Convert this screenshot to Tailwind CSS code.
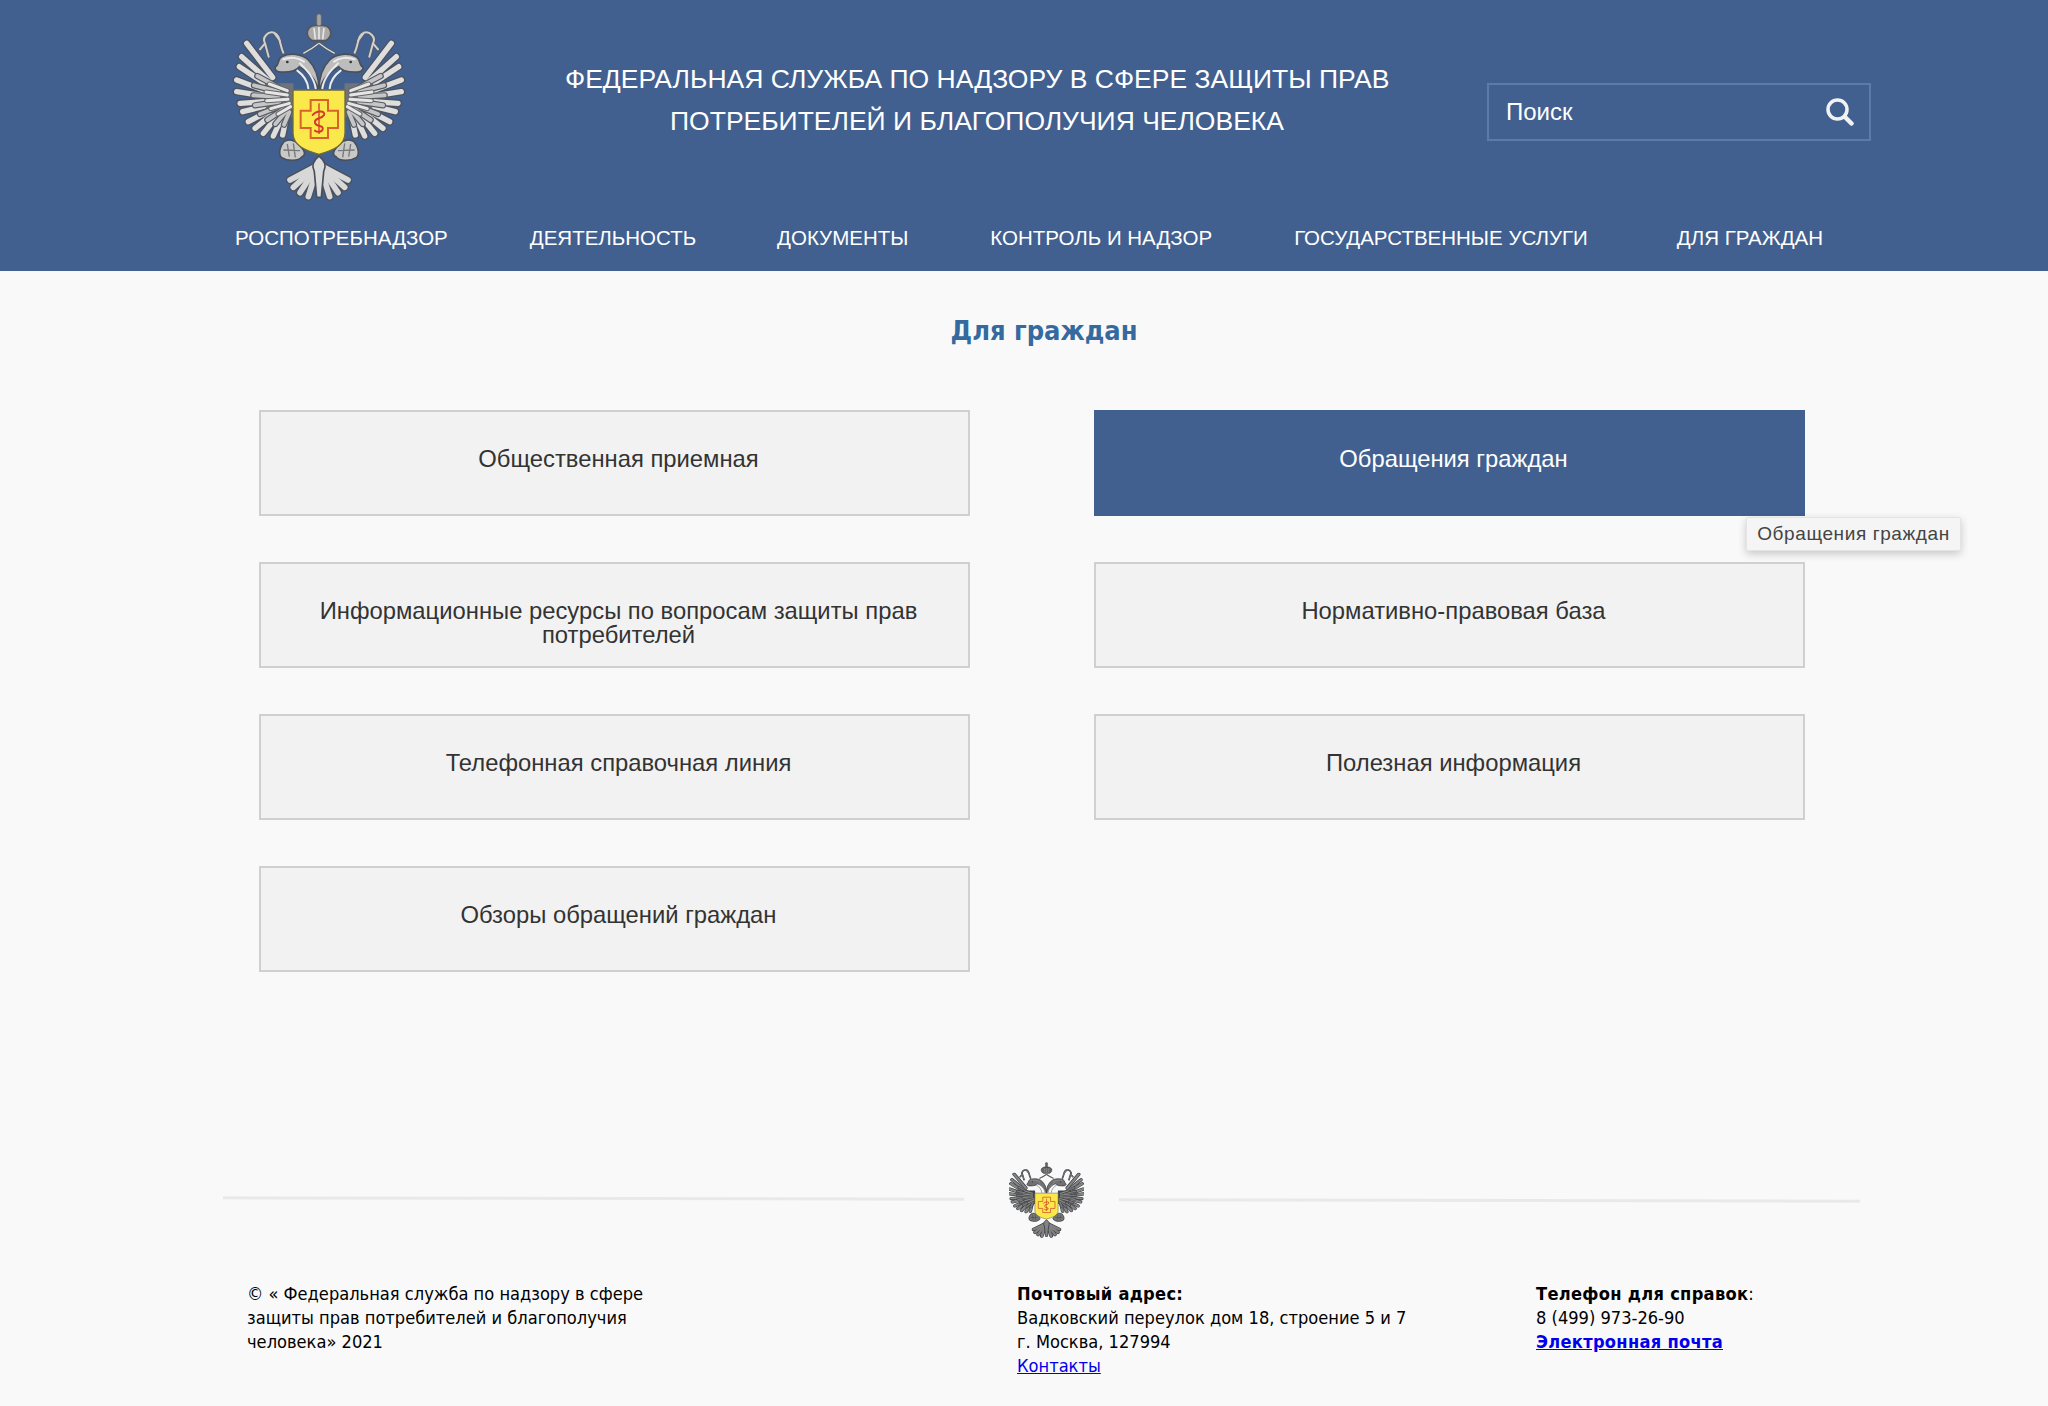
<!DOCTYPE html>
<html lang="ru">
<head>
    <meta charset="UTF-8">
    <title>Для граждан</title>
    <script src="https://cdn.jsdelivr.net/npm/@tailwindcss/browser@4"></script>
</head>
<body class="bg-[#f9f9f9] min-h-screen font-['Liberation_Sans',sans-serif] text-[#333]">

    <!-- emblem, drawn once and reused in the footer -->
    <svg width="0" height="0" class="absolute">
        <defs>
            <g id="outer-row">
                <path d="M218 232 L140 130"/><path d="M212 248 L125 170"/><path d="M209 260 L118 200"/><path d="M206 276 L110 240"/><path d="M206 290 L110 275"/><path d="M210 304 L120 310"/><path d="M213 314 L128 335"/><path d="M220 326 L145 365"/><path d="M228 334 L165 385"/><path d="M238 340 L190 400"/><path d="M250 343 L220 408"/><path d="M261 342 L248 405"/>
            </g>
            <g id="mid-row">
                <path d="M235 262 L172 228"/><path d="M235 275 L162 256"/><path d="M235 290 L160 286"/><path d="M238 305 L165 316"/><path d="M242 318 L180 342"/><path d="M250 328 L202 360"/><path d="M258 334 L226 372"/><path d="M268 336 L252 374"/>
            </g>
            <g id="inner-row">
                <path d="M262 272 L208 252"/><path d="M262 285 L198 276"/><path d="M264 298 L200 302"/><path d="M268 310 L212 326"/><path d="M272 320 L234 342"/>
            </g>
            <g id="ribbon"><path d="M250 158 C238 135 242 105 222 98 C205 92 185 112 195 130 L180 148 M222 98 L240 122 M195 130 L206 170"/></g>
            <g id="tail-row">
                <path d="M345 500 L270 540"/><path d="M345 503 L280 562"/><path d="M347 506 L300 578"/><path d="M350 510 L325 590"/>
            </g>
            <g id="half">
                <use href="#ribbon" fill="none" stroke="#555a63" stroke-width="11" stroke-linecap="round"/>
                <use href="#ribbon" fill="none" stroke="#d0d0d0" stroke-width="6" stroke-linecap="round"/>
                <use href="#outer-row" fill="none" stroke="#4c515b" stroke-width="24" stroke-linecap="round"/>
                <use href="#outer-row" fill="none" stroke="#dedede" stroke-width="16" stroke-linecap="round"/>
                <path d="M195 250 L280 250 L285 350 L235 352 L195 320 Z" fill="#6f737b"/>
                <use href="#mid-row" fill="none" stroke="#555a63" stroke-width="19" stroke-linecap="round"/>
                <use href="#mid-row" fill="none" stroke="#c6c6c6" stroke-width="12" stroke-linecap="round"/>
                <use href="#inner-row" fill="none" stroke="#666" stroke-width="15" stroke-linecap="round"/>
                <use href="#inner-row" fill="none" stroke="#e6e6e6" stroke-width="9" stroke-linecap="round"/>
                <!-- neck and head -->
                <path d="M354 270 C350 238 322 212 298 200 C290 212 270 216 250 216 C232 218 222 210 226 200 C238 198 232 176 245 170 C270 158 305 160 325 180 C345 200 357 225 357 270 Z" fill="#bdbdbd" stroke="#4a4f5a" stroke-width="5"/>
                <path d="M347 265 C342 232 322 212 300 190 M325 265 C322 240 310 225 292 212 M250 178 C270 170 295 172 312 185" fill="none" stroke="#ececec" stroke-width="6" stroke-linecap="round"/>
                <circle cx="262" cy="186" r="4" fill="#333"/>
                <path d="M310 160 C330 150 342 142 357 130" fill="none" stroke="#555" stroke-width="8"/>
                <path d="M310 160 C330 150 342 142 357 130" fill="none" stroke="#ddd" stroke-width="4"/>
                <!-- claw -->
                <path d="M252 425 C265 415 285 420 295 432 C310 448 322 462 306 470 C295 484 262 484 244 472 C234 462 240 438 252 425 Z" fill="#c9c9c9" stroke="#4a4f5a" stroke-width="5"/>
                <path d="M262 432 L268 470 M280 430 L286 472 M250 450 L300 452" stroke="#777" stroke-width="4" fill="none"/>
                <!-- tail -->
                <use href="#tail-row" fill="none" stroke="#4c515b" stroke-width="25" stroke-linecap="round"/>
                <use href="#tail-row" fill="none" stroke="#d8d8d8" stroke-width="17" stroke-linecap="round"/>
            </g>
            <g id="bird">
                <use href="#half"/>
                <use href="#half" transform="translate(714 0) scale(-1 1)"/>
                <!-- tail centre -->
                <path d="M357 468 C335 485 335 500 343 515 L350 592 H364 L371 515 C379 500 379 485 357 468 Z" fill="#dcdcdc" stroke="#4a4f5a" stroke-width="5"/>
                <!-- crown -->
                <path d="M337 122 C312 108 320 78 345 76 L369 76 C394 78 402 108 377 122 Z" fill="#ababab" stroke="#555" stroke-width="5"/>
                <path d="M357 80 V118 M342 84 L346 118 M372 84 L368 118" stroke="#e6e6e6" stroke-width="5" fill="none"/>
                <rect x="350" y="42" width="14" height="36" rx="6" fill="#a5a5a5" stroke="#666" stroke-width="3"/>
            </g>
            <g id="shield">
                <path d="M279 270 H435 V400 C435 438 395 452 357 463 C319 452 279 438 279 400 Z" fill="#fbe84a" stroke="#6f6a3a" stroke-width="4"/>
                <path d="M332 300 H384 V332 H414 V384 H384 V414 H332 V384 H302 V332 H332 Z" fill="none" stroke="#d9632a" stroke-width="6"/>
                <path d="M357 310 V402" stroke="#d43a2a" stroke-width="4"/>
                <path d="M338 345 C350 330 378 332 372 345 C365 358 342 352 345 368 C348 382 372 374 368 388 C364 398 350 396 345 392" fill="none" stroke="#d43a2a" stroke-width="6" stroke-linecap="round"/>
            </g>
        </defs>
    </svg>

    <header class="bg-[#416090] h-[271px]">
        <div class="flex pl-[200px] h-[210px]">
            <svg class="w-[260px] h-[210px] shrink-0 blur-[0.6px]" viewBox="0 0 780 630"><use href="#bird"/><use href="#shield"/></svg>
            <div class="ml-[105px] w-[824px] pt-[58px] text-center text-white text-[26.5px] leading-[42px] whitespace-nowrap">
                <p>ФЕДЕРАЛЬНАЯ СЛУЖБА ПО НАДЗОРУ В СФЕРЕ ЗАЩИТЫ ПРАВ</p>
                <p>ПОТРЕБИТЕЛЕЙ И БЛАГОПОЛУЧИЯ ЧЕЛОВЕКА</p>
            </div>
            <div class="ml-[98px] mt-[83px] w-[384px] h-[58px] border-2 border-[#5a7bab] flex items-center justify-between pl-[17px] pr-[15px]">
                <span class="text-white text-[24px]">Поиск</span>
                <svg class="w-[28px] h-[28px]" viewBox="0 0 28 28" fill="none" stroke="#f2f2f2">
                    <circle cx="11.5" cy="11.5" r="9.5" stroke-width="3.5"/>
                    <path d="M19 19 L25.5 25.5" stroke-width="4.5" stroke-linecap="round"/>
                </svg>
            </div>
        </div>
        <nav class="flex pl-[235px] pt-[15px] text-white text-[20.5px] leading-[26px] whitespace-nowrap">
            <a>РОСПОТРЕБНАДЗОР</a>
            <a class="ml-[82px]">ДЕЯТЕЛЬНОСТЬ</a>
            <a class="ml-[81px]">ДОКУМЕНТЫ</a>
            <a class="ml-[82px]">КОНТРОЛЬ И НАДЗОР</a>
            <a class="ml-[82px]">ГОСУДАРСТВЕННЫЕ УСЛУГИ</a>
            <a class="ml-[89px]">ДЛЯ ГРАЖДАН</a>
        </nav>
    </header>

    <main>
        <h1 class="text-center font-['DejaVu_Sans_Condensed','DejaVu_Sans',sans-serif] font-bold text-[27px] leading-[30px] text-[#356a9f] pt-[45px] pl-[40px]">Для граждан</h1>

        <div class="relative grid grid-cols-[711px_711px] gap-x-[124px] gap-y-[46px] ml-[259px] mt-[64px] w-[1546px] text-[23.8px] leading-[24px] text-center">
            <a class="h-[106px] pt-[35px] pl-[10px] pr-[2px] border-2 border-[#d0d0d0] bg-[#f2f2f2]">Общественная приемная</a>
            <a class="h-[106px] pt-[37px] pl-[12px] pr-[4px] bg-[#416090] text-white">Обращения граждан</a>
            <a class="h-[106px] pt-[35px] pl-[10px] pr-[2px] border-2 border-[#d0d0d0] bg-[#f2f2f2]">Информационные ресурсы по вопросам защиты прав<br>потребителей</a>
            <a class="h-[106px] pt-[35px] pl-[10px] pr-[2px] border-2 border-[#d0d0d0] bg-[#f2f2f2]">Нормативно-правовая база</a>
            <a class="h-[106px] pt-[35px] pl-[10px] pr-[2px] border-2 border-[#d0d0d0] bg-[#f2f2f2]">Телефонная справочная линия</a>
            <a class="h-[106px] pt-[35px] pl-[10px] pr-[2px] border-2 border-[#d0d0d0] bg-[#f2f2f2]">Полезная информация</a>
            <a class="h-[106px] pt-[35px] pl-[10px] pr-[2px] border-2 border-[#d0d0d0] bg-[#f2f2f2]">Обзоры обращений граждан</a>

            <div class="absolute left-[1487px] top-[107px] w-[215px] h-[34px] flex items-center justify-center bg-[#f5f5f5] border border-[#e4e4e4] rounded-[2px] shadow-[0_3px_8px_rgba(0,0,0,0.2)] text-[19px] tracking-[0.6px] text-[#444] whitespace-nowrap">Обращения граждан</div>
        </div>
    </main>

    <footer class="mt-[190px] text-black">
        <div class="flex items-center pl-[223px]">
            <div class="w-[741px] h-[3px] bg-[#e9e9e9] mb-[3px] rotate-[0.1deg]"></div>
            <svg class="ml-[45px] w-[75px] h-[76px] shrink-0 blur-[0.4px]" viewBox="105 38 504 566" preserveAspectRatio="none"><use href="#bird" class="brightness-[.6]"/><use href="#shield"/></svg>
            <div class="ml-[35px] w-[741px] h-[3px] bg-[#e9e9e9] mt-[1px] rotate-[0.1deg]"></div>
        </div>
        <div class="flex mt-[44px] pl-[247px] font-['DejaVu_Sans_Condensed','DejaVu_Sans',sans-serif] text-[18.1px] leading-[24px]">
            <p class="w-[770px]">© « Федеральная служба по надзору в сфере<br>защиты прав потребителей и благополучия<br>человека» 2021</p>
            <p class="w-[519px]"><b class="tracking-[0.3px]">Почтовый адрес:</b><br>Вадковский переулок дом 18, строение 5 и 7<br>г. Москва, 127994<br><a class="text-[#0000ee] underline">Контакты</a></p>
            <p><b class="tracking-[0.3px]">Телефон для справок</b>:<br>8 (499) 973-26-90<br><a class="text-[#0000ee] underline font-bold tracking-[0.3px]">Электронная почта</a></p>
        </div>
    </footer>

</body>
</html>
